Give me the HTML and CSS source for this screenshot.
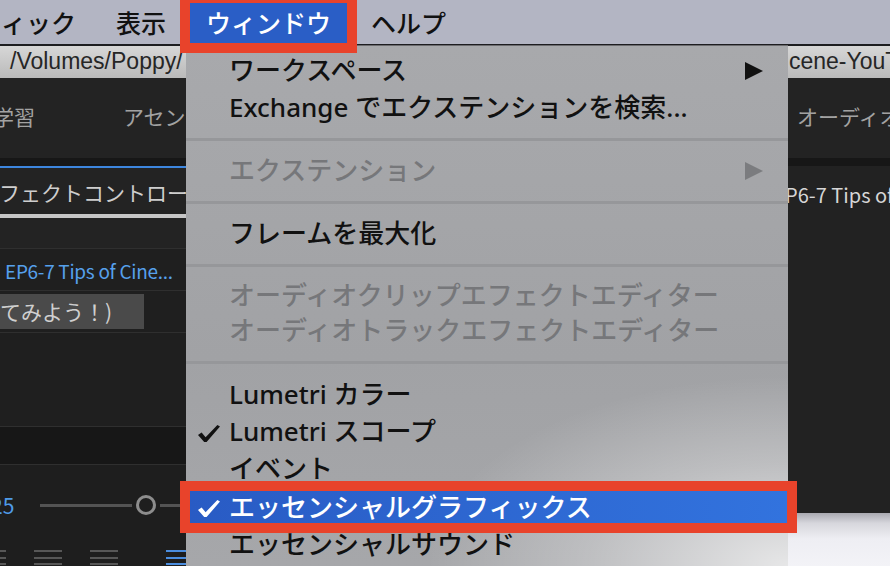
FILE: index.html
```html
<!DOCTYPE html>
<html lang="ja">
<head>
<meta charset="utf-8">
<title>Premiere Pro - ウィンドウ</title>
<link rel="stylesheet" href="styles.css">
</head>
<body>
<div class="screen">
  <header class="menubar">
    <span class="mb-item first">ィック</span>
    <span class="mb-item">表示</span>
    <span class="mb-item active">ウィンドウ</span>
    <span class="mb-item">ヘルプ</span>
  </header>

  <div class="window">
    <div class="titlebar">
      <span class="title-left">/Volumes/Poppy/</span>
      <span class="title-right">cene-YouTube</span>
    </div>
    <div class="workspace">
      <section class="panel-left">
        <div class="tabs">
          <span class="tab tab-learn">学習</span>
          <span class="tab">アセンブリ</span>
        </div>
        <div class="strip strip-active"></div>
        <div class="panel-head"><span class="head-text">エフェクトコントロール</span></div>
        <div class="head-rule"></div>
        <div class="blank"></div>
        <div class="row clip-row"><span class="clip-name">EP6-7 Tips of Cine...</span></div>
        <div class="row field-row"><span class="field">てみよう！)</span></div>
        <div class="area"></div>
        <div class="band"></div>
        <div class="controls">
          <div class="slider-row">
            <span class="value">25</span>
            <span class="track t1"></span>
            <span class="knob"></span>
            <span class="track t2"></span>
          </div>
          <div class="align-row">
            <svg class="align-icons" width="186" height="20" viewBox="0 0 186 20">
              <g fill="#575757">
                <rect x="0" y="5" width="6" height="2"/>
                <rect x="0" y="12" width="6" height="2"/>
                <rect x="0" y="18" width="6" height="2"/>
                <rect x="34" y="5" width="28" height="2"/>
                <rect x="34" y="12" width="28" height="2"/>
                <rect x="34" y="18" width="28" height="2"/>
                <rect x="90" y="5" width="28" height="2"/>
                <rect x="90" y="12" width="28" height="2"/>
                <rect x="90" y="18" width="28" height="2"/>
              </g>
              <g fill="#4a8ddf">
                <rect x="166" y="5" width="20" height="2"/>
                <rect x="166" y="12" width="20" height="2"/>
                <rect x="166" y="18" width="20" height="2"/>
              </g>
            </svg>
          </div>
        </div>
      </section>

      <div class="middle"></div>

      <section class="panel-right">
        <div class="tabs tabs-right"><span class="tab">オーディオ</span></div>
        <div class="strip"></div>
        <div class="r-body">
          <div class="r-clip"><span class="r-clip-name">P6-7 Tips of</span></div>
        </div>
        <div class="desk"></div>
      </section>
    </div>
  </div>

  <nav class="dropdown">
    <div class="mi"><span class="check"></span><span class="label">ワークスペース</span>
      <svg class="arrow" width="18" height="18" viewBox="0 0 18 18"><polygon points="0,0 18,9 0,18"/></svg></div>
    <div class="mi"><span class="check"></span><span class="label">Exchange でエクステンションを検索...</span></div>
    <div class="sep"></div>
    <div class="mi disabled"><span class="check"></span><span class="label">エクステンション</span>
      <svg class="arrow" width="18" height="18" viewBox="0 0 18 18"><polygon points="0,0 18,9 0,18"/></svg></div>
    <div class="sep"></div>
    <div class="mi"><span class="check"></span><span class="label">フレームを最大化</span></div>
    <div class="sep"></div>
    <div class="mi disabled short"><span class="check"></span><span class="label">オーディオクリップエフェクトエディター</span></div>
    <div class="mi disabled short"><span class="check"></span><span class="label">オーディオトラックエフェクトエディター</span></div>
    <div class="sep tall"></div>
    <div class="mi"><span class="check"></span><span class="label">Lumetri カラー</span></div>
    <div class="mi"><span class="check"><svg width="22" height="17" viewBox="0 0 22 17"><path d="M0 10 L3.6 7.4 L7.6 12.2 L19.4 0 L22 1.6 L8.6 17 L6.2 17 Z"/></svg></span><span class="label">Lumetri スコープ</span></div>
    <div class="mi"><span class="check"></span><span class="label">イベント</span></div>
    <div class="mi hl"><span class="check"><svg width="22" height="17" viewBox="0 0 22 17"><path d="M0 10 L3.6 7.4 L7.6 12.2 L19.4 0 L22 1.6 L8.6 17 L6.2 17 Z"/></svg></span><span class="label">エッセンシャルグラフィックス</span></div>
    <div class="mi"><span class="check"></span><span class="label">エッセンシャルサウンド</span></div>
  </nav>
</div>
</body>
</html>
```

FILE: styles.css
```css
* {
  box-sizing: border-box;
  margin: 0;
  padding: 0;
}

html,
body {
  width: 890px;
  height: 566px;
  overflow: hidden;
}

body {
  background: #1e1e1e;
  font-family: "Noto Sans CJK JP", sans-serif;
}

.screen {
  position: relative;
  width: 890px;
  height: 566px;
  display: flex;
  flex-direction: column;
  overflow: hidden;
}

/* ---------- macOS menu bar ---------- */
.menubar {
  flex: none;
  height: 46px;
  display: flex;
  align-items: flex-start;
  gap: 8px;
  background: #b3b5c3;
  border-bottom: 2px solid #1d1d20;
  font-family: "Noto Sans CJK JP", sans-serif;
  font-size: 25px;
  font-weight: 500;
  color: #111;
}

.mb-item {
  height: 44px;
  line-height: 44px;
  padding: 0 16px;
  white-space: nowrap;
}

.mb-item.first {
  margin-left: -15px;
}

.mb-item.active {
  position: relative;
  z-index: 6;
  height: 40px;
  margin-top: 3px;
  line-height: 38px;
  background: #2a5ec6;
  color: #fff;
  outline: 10px solid #e8432b;
}

/* ---------- app window ---------- */
.window {
  flex: 1;
  display: flex;
  flex-direction: column;
  min-height: 0;
}

.titlebar {
  flex: none;
  height: 32px;
  display: flex;
  background: linear-gradient(#d7d7d7, #bababa);
  font-family: "Liberation Sans", Arial, sans-serif;
  font-size: 23px;
  line-height: 31px;
  color: #262626;
  white-space: nowrap;
}

.title-left {
  padding-left: 10px;
}

.title-right {
  margin-left: auto;
  width: 101px;
  overflow: hidden;
}

.workspace {
  flex: 1;
  display: flex;
  min-height: 0;
}

.panel-left {
  width: 186px;
  flex: none;
  display: flex;
  flex-direction: column;
  background: #232323;
  overflow: hidden;
}

.middle {
  flex: 1;
  background: #232323;
}

.panel-right {
  width: 102px;
  flex: none;
  display: flex;
  flex-direction: column;
  overflow: hidden;
}

.tabs {
  flex: none;
  height: 80px;
  padding-bottom: 4px;
  display: flex;
  align-items: center;
  gap: 88px;
  background: #232323;
  font-size: 21px;
  color: #a2a2a2;
  white-space: nowrap;
  overflow: hidden;
}

.tab-learn {
  margin-left: -7px;
}

.tabs-right {
  padding-left: 9px;
}

.strip {
  flex: none;
  height: 8px;
  background: #171717;
}

.strip-active {
  height: 10px;
  border-bottom: 2px solid #3d86de;
}

.panel-head {
  flex: none;
  height: 46px;
  line-height: 48px;
  font-size: 21px;
  color: #cecece;
  white-space: nowrap;
}

.head-text {
  display: inline-block;
  margin-left: -22px;
}

.head-rule {
  flex: none;
  height: 4px;
  background: #c6c6c6;
}

.blank {
  flex: none;
  height: 30px;
}

.row {
  flex: none;
  border-top: 1px solid #2f2f2f;
  background: #1f1f1f;
  white-space: nowrap;
}

.clip-row {
  height: 42px;
  line-height: 44px;
  padding-left: 5px;
}

.clip-name {
  font-size: 19px;
  letter-spacing: -0.3px;
  color: #56a0ec;
}

.field-row {
  height: 43px;
  padding-top: 3px;
  border-bottom: 1px solid #2f2f2f;
}

.field {
  display: block;
  width: 144px;
  height: 35px;
  line-height: 34px;
  background: #4a4a4a;
  font-size: 21px;
  color: #cfcfcf;
}

.area {
  flex: none;
  height: 93px;
  background: #1f1f1f;
}

.band {
  flex: none;
  height: 39px;
  background: #171717;
  border-top: 1px solid #2f2f2f;
  border-bottom: 1px solid #2f2f2f;
}

.controls {
  flex: 1;
  display: flex;
  flex-direction: column;
  background: #1e1e1e;
}

.slider-row {
  height: 80px;
  flex: none;
  display: flex;
  align-items: center;
}

.value {
  flex: none;
  width: 49px;
  margin-left: -9px;
  font-size: 21px;
  color: #4f9be8;
}

.track {
  height: 3px;
  background: #545454;
}

.t1 {
  width: 92px;
  flex: none;
}

.t2 {
  flex: 1;
  margin-left: 4px;
}

.knob {
  flex: none;
  width: 20px;
  height: 20px;
  margin-left: 4px;
  border: 3px solid #8d8d8d;
  border-radius: 50%;
}

.align-row {
  flex: 1;
}

.align-icons {
  display: block;
}

.r-body {
  flex: none;
  height: 347px;
  background: #222;
}

.r-clip {
  height: 58px;
  line-height: 58px;
  white-space: nowrap;
}

.r-clip-name {
  display: inline-block;
  margin-left: -3px;
  font-size: 20px;
  color: #d6d6d6;
}

.desk {
  flex: 1;
  background: linear-gradient(#a9a9b0 0, #d6d6dc 10px, #eeeef3 26px, #f3f3f7);
}

/* ---------- dropdown menu ---------- */
.dropdown {
  position: absolute;
  z-index: 4;
  left: 186px;
  top: 45px;
  width: 602px;
  height: 521px;
  padding-top: 6px;
  border-top: 1px solid #6c6c6f;
  background:
    radial-gradient(ellipse 360px 190px at 100% 100%, rgba(255, 255, 255, 0.72), rgba(255, 255, 255, 0.28) 55%, rgba(255, 255, 255, 0) 100%),
    linear-gradient(#a8a9ac, #a1a2a5 60%, #a6a7aa);
  font-family: "Noto Sans", "Noto Sans CJK JP", sans-serif;
  font-size: 26px;
  font-weight: 500;
  color: #111;
}

.mi {
  height: 37px;
  display: flex;
  align-items: center;
  padding-left: 12px;
  padding-right: 25px;
  line-height: 37px;
  white-space: nowrap;
}

.mi.short {
  height: 35px;
}

.check {
  flex: none;
  width: 31px;
  height: 17px;
  display: flex;
  margin-top: 3px;
}

.check svg {
  fill: #111;
}

.label {
  flex: 1;
}

.arrow {
  flex: none;
  fill: #111;
}

.mi.disabled {
  color: #76777a;
}

.mi.disabled .arrow {
  fill: #7b7c7f;
}

.mi.hl {
  height: 32px;
  margin: 4px 1px 3px 4px;
  padding-left: 8px;
  line-height: 32px;
  background: linear-gradient(90deg, #295bc4, #3273de);
  color: #fff;
  outline: 10px solid #e8432b;
}

.mi.hl .check svg {
  fill: #fff;
}

.sep {
  height: 26px;
  display: flex;
  align-items: center;
}

.sep.tall {
  height: 28px;
}

.sep::before {
  content: "";
  flex: 1;
  height: 3px;
  background: #96979a;
}
```
